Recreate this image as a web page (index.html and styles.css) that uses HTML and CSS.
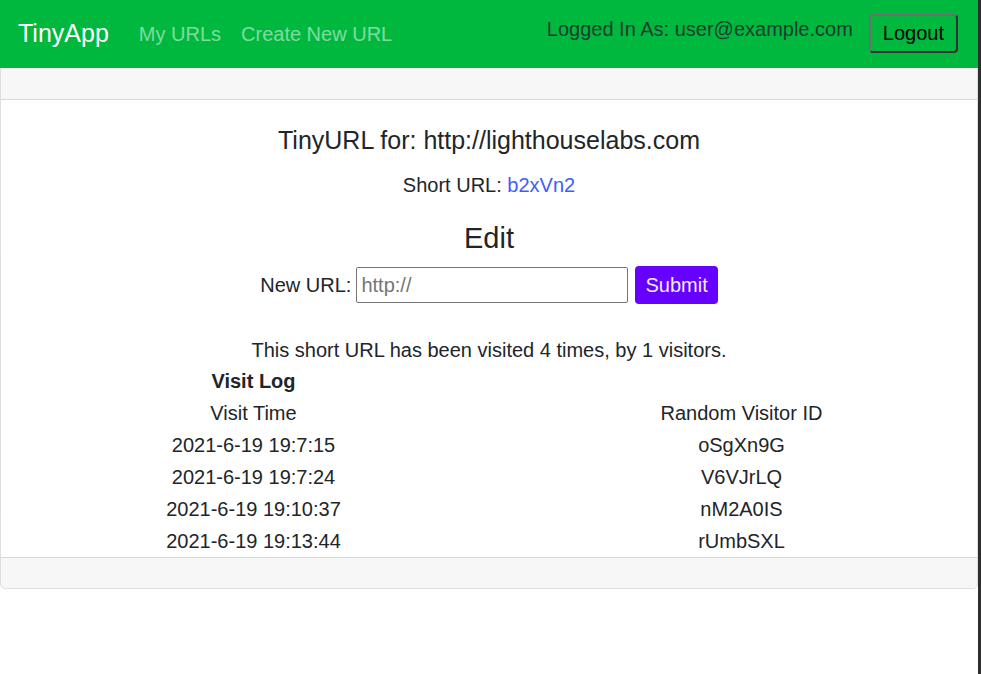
FILE: index.html
```html
<!DOCTYPE html>
<html>
<head>
<meta charset="utf-8">
<title>TinyApp</title>
<link rel="stylesheet" href="styles.css">
</head>
<body>
<div class="page">
  <nav class="navbar">
    <a class="brand" href="#">TinyApp</a>
    <a class="nav-link" href="#">My URLs</a>
    <a class="nav-link" href="#">Create New URL</a>
    <div class="nav-right">
      <span class="nav-text">Logged In As: user@example.com</span>
      <button class="logout" type="button">Logout</button>
    </div>
  </nav>
  <div class="card">
    <div class="card-header"></div>
    <div class="card-body">
      <h3 class="title">TinyURL for: http://lighthouselabs.com</h3>
      <p class="short">Short URL: <a href="#">b2xVn2</a></p>
      <h2 class="edit">Edit</h2>
      <form class="edit-form">
        <label class="label" for="newurl">New URL:</label>
        <input class="url-input" id="newurl" type="text" placeholder="http://">
        <button class="submit" type="button">Submit</button>
      </form>
      <p class="visits">This short URL has been visited 4 times, by 1 visitors.</p>
      <table class="log">
        <colgroup><col class="c1"><col class="c2"></colgroup>
        <tr><th>Visit Log</th><td></td></tr>
        <tr><td>Visit Time</td><td>Random Visitor ID</td></tr>
        <tr><td>2021-6-19 19:7:15</td><td>oSgXn9G</td></tr>
        <tr><td>2021-6-19 19:7:24</td><td>V6VJrLQ</td></tr>
        <tr><td>2021-6-19 19:10:37</td><td>nM2A0IS</td></tr>
        <tr><td>2021-6-19 19:13:44</td><td>rUmbSXL</td></tr>
      </table>
    </div>
    <div class="card-footer"></div>
  </div>
</div>
<div class="edge"></div>
</body>
</html>
```

FILE: styles.css
```css
html, body {
  margin: 0;
  padding: 0;
}
body {
  display: flex;
  min-height: 100vh;
  font-family: "Liberation Sans", Arial, sans-serif;
  font-size: 20px;
  line-height: 1.5;
  color: #212529;
  background: #fff;
}
.page {
  flex: 1;
  min-width: 0;
}
.edge {
  width: 3px;
  background: #2e2e2e;
}
.navbar {
  height: 68px;
  box-sizing: border-box;
  display: flex;
  align-items: center;
  padding: 0 20px 0 18px;
  background: #00b83e;
}
.brand {
  font-size: 25px;
  color: #fff;
  text-decoration: none;
  margin-right: 20px;
}
.nav-link {
  padding: 0 10px;
  color: rgba(255, 255, 255, 0.5);
  text-decoration: none;
}
.nav-right {
  margin-left: auto;
  display: flex;
  align-items: center;
  gap: 16px;
}
.nav-text {
  color: #1d3d2c;
  margin-bottom: 10px;
}
.logout {
  box-sizing: border-box;
  height: 39px;
  padding: 0 12px;
  margin-bottom: 2px;
  font: inherit;
  font-size: 20px;
  color: #000;
  background: transparent;
  border: 2px solid;
  border-color: #6e6e6e #333 #333 #6e6e6e;
  border-radius: 4px;
}
.card {
  border: 1px solid rgba(0, 0, 0, 0.125);
  border-top: 0;
  border-radius: 0 0 5px 5px;
  overflow: hidden;
}
.card-header {
  height: 31px;
  background: rgba(0, 0, 0, 0.03);
  border-bottom: 1px solid rgba(0, 0, 0, 0.125);
}
.card-footer {
  height: 30px;
  background: rgba(0, 0, 0, 0.03);
  border-top: 1px solid rgba(0, 0, 0, 0.125);
}
.card-body {
  text-align: center;
  padding-top: 25px;
}
.title {
  margin: 0;
  font-size: 25px;
  font-weight: 400;
  line-height: 30px;
}
.short {
  margin: 15px 0 0;
  line-height: 30px;
}
.short a {
  color: #3f5efb;
  text-decoration: none;
}
.edit {
  margin: 21px 0 0;
  font-size: 29px;
  font-weight: 400;
  line-height: 35px;
}
.edit-form {
  margin: 10px 0 0;
  display: flex;
  justify-content: center;
  align-items: center;
  height: 38px;
}
.label {
  margin-right: 5px;
}
.url-input {
  box-sizing: border-box;
  width: 272px;
  height: 36px;
  padding: 1px 4px;
  font: inherit;
  font-size: 20px;
  border: 1px solid #767676;
  border-radius: 2px;
  margin-right: 7px;
}
.url-input::placeholder {
  color: #757575;
}
.submit {
  height: 38px;
  padding: 0 10px;
  font: inherit;
  font-size: 20px;
  color: #f4eaff;
  background: #6600ff;
  border: 0;
  border-radius: 4px;
}
.visits {
  margin: 31px 0 0;
  line-height: 30px;
}
.log {
  width: 100%;
  border-collapse: collapse;
}
.log .c1 {
  width: 505px;
}
.log th,
.log td {
  padding: 0;
  height: 32px;
  line-height: 32px;
  text-align: center;
}
.log th {
  font-weight: 700;
}
```
